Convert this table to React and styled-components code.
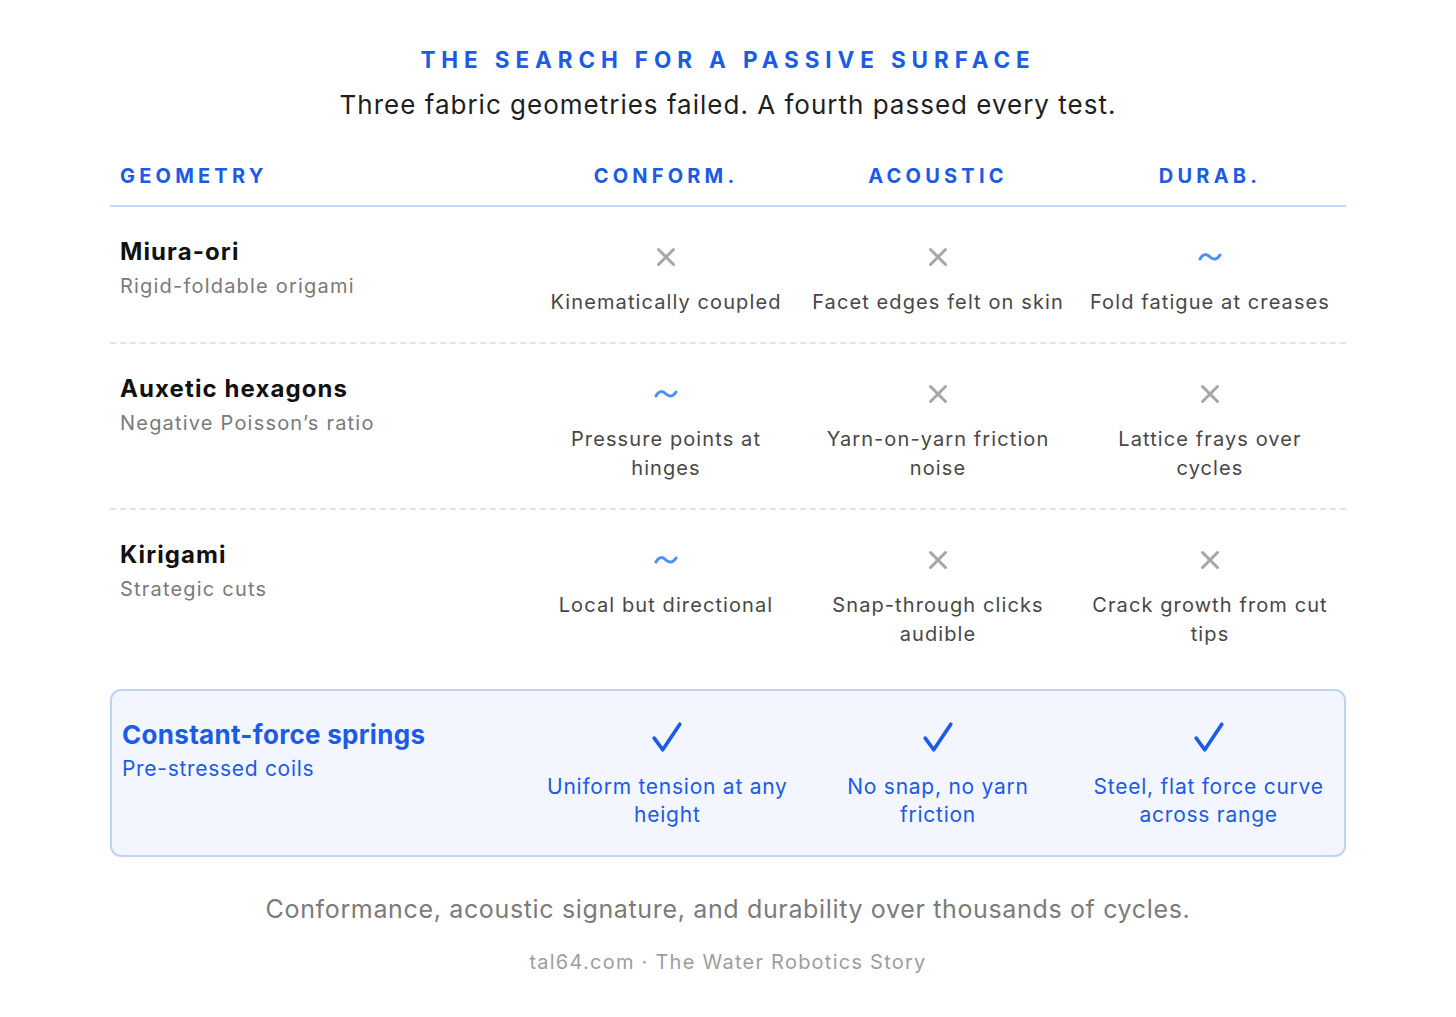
import React from "react";
import styled, { createGlobalStyle } from "styled-components";

const Global = createGlobalStyle`
  html, body { margin: 0; padding: 0; background: #ffffff; }
  body { font-family: Inter, "Noto Sans", "Liberation Sans", sans-serif; -webkit-font-smoothing: antialiased; }
`;

const BLUE = "#1b5be6";

const Page = styled.div`
  width: 1456px;
  min-height: 1017px;
  box-sizing: border-box;
  padding: 46px 110px 0;
  display: flex;
  flex-direction: column;
  align-items: center;
`;

const Kicker = styled.div`
  font-size: 22.5px;
  line-height: 28px;
  font-weight: 700;
  letter-spacing: 5.9px;
  color: ${BLUE};
  text-transform: uppercase;
`;

const Headline = styled.div`
  margin-top: 14px;
  font-size: 26px;
  line-height: 34px;
  letter-spacing: 1px;
  color: #1f1f1f;
`;

const Table = styled.div`
  margin-top: 42px;
  width: 100%;
  display: flex;
  flex-direction: column;
`;

const HeadRow = styled.div`
  display: grid;
  grid-template-columns: 420px repeat(3, 1fr);
  padding-bottom: 17px;
  border-bottom: 2px solid #c3d7f8;
`;

const HeadCell = styled.div`
  font-size: 20px;
  line-height: 24px;
  font-weight: 700;
  letter-spacing: 4.2px;
  color: ${BLUE};
  text-align: ${(p) => (p.$left ? "left" : "center")};
  padding-left: ${(p) => (p.$left ? "10px" : "0")};
`;

const Row = styled.div`
  display: grid;
  grid-template-columns: 420px repeat(3, 1fr);
  padding: 30px 0 25px;
  border-bottom: ${(p) => (p.$last ? "none" : "2px dashed #e4e4e4")};
`;

const WinRow = styled.div`
  margin-top: 15px;
  display: grid;
  grid-template-columns: 420px repeat(3, 1fr);
  padding: 28px 0 26px;
  border: 2px solid #bdd3f7;
  border-radius: 11px;
  background: #f3f6fe;
`;

const Geo = styled.div`
  padding-left: 10px;
  display: flex;
  flex-direction: column;
`;

const GeoName = styled.div`
  font-size: ${(p) => (p.$win ? "26px" : "24px")};
  line-height: ${(p) => (p.$win ? "32px" : "30px")};
  font-weight: 700;
  letter-spacing: ${(p) => (p.$win ? "0.3px" : "1.1px")};
  color: ${(p) => (p.$win ? BLUE : "#111111")};
`;

const GeoSub = styled.div`
  margin-top: ${(p) => (p.$win ? "4px" : "5px")};
  font-size: ${(p) => (p.$win ? "21px" : "20px")};
  line-height: 28px;
  color: ${(p) => (p.$win ? BLUE : "#7a7a7a")};
  letter-spacing: ${(p) => (p.$win ? "0.7px" : "1.2px")};
`;

const Cell = styled.div`
  display: flex;
  flex-direction: column;
  align-items: center;
  text-align: center;
  padding: 0 2px;
`;

const Mark = styled.div`
  margin-top: ${(p) => (p.$win ? "2px" : "6px")};
  height: ${(p) => (p.$win ? "32px" : "28px")};
  display: flex;
  align-items: center;
  justify-content: center;
`;

const Note = styled.div`
  margin-top: ${(p) => (p.$win ? "20px" : "17px")};
  font-size: ${(p) => (p.$win ? "21px" : "20px")};
  line-height: ${(p) => (p.$win ? "28px" : "29px")};
  color: ${(p) => (p.$win ? BLUE : "#474747")};
  letter-spacing: ${(p) => (p.$win ? "0.75px" : "1.1px")};
  max-width: 254px;
`;

const Caption = styled.div`
  margin-top: 36px;
  font-size: 25px;
  line-height: 32px;
  letter-spacing: 0.65px;
  color: #7b7b7b;
`;

const Credit = styled.div`
  margin-top: 24px;
  font-size: 20px;
  line-height: 26px;
  color: #9d9d9d;
  letter-spacing: 1.25px;
`;

const Cross = () => (
  <svg width="20" height="20" viewBox="0 0 20 20">
    <path d="M2.5 2.5 L17.5 17.5 M17.5 2.5 L2.5 17.5" stroke="#a6a6a6" strokeWidth="3" strokeLinecap="round" fill="none" />
  </svg>
);

const Tilde = () => (
  <svg width="24" height="10" viewBox="0 0 24 10">
    <path d="M2 7 C5 1, 9 2, 12 5 C15 8, 19 8, 22 3" stroke="#4c90f4" strokeWidth="3" strokeLinecap="round" fill="none" />
  </svg>
);

const Check = () => (
  <svg width="32" height="32" viewBox="0 0 30 30">
    <path d="M3 16 L11 27 L27 3" stroke="#1b5be6" strokeWidth="3.4" strokeLinecap="round" strokeLinejoin="round" fill="none" />
  </svg>
);

const icons = { x: Cross, t: Tilde, c: Check };

const rows = [
  {
    name: "Miura-ori",
    sub: "Rigid-foldable origami",
    cells: [
      ["x", "Kinematically coupled"],
      ["x", "Facet edges felt on skin"],
      ["t", "Fold fatigue at creases"],
    ],
  },
  {
    name: "Auxetic hexagons",
    sub: "Negative Poisson\u2019s ratio",
    cells: [
      ["t", "Pressure points at hinges"],
      ["x", "Yarn-on-yarn friction noise"],
      ["x", "Lattice frays over cycles"],
    ],
  },
  {
    name: "Kirigami",
    sub: "Strategic cuts",
    cells: [
      ["t", "Local but directional"],
      ["x", "Snap-through clicks audible"],
      ["x", "Crack growth from cut tips"],
    ],
  },
];

const winner = {
  name: "Constant-force springs",
  sub: "Pre-stressed coils",
  cells: [
    ["c", "Uniform tension at any height"],
    ["c", "No snap, no yarn friction"],
    ["c", "Steel, flat force curve across range"],
  ],
};

const Cells = ({ cells, win }) =>
  cells.map(([k, text], i) => {
    const Icon = icons[k];
    return (
      <Cell key={i}>
        <Mark $win={win}>
          <Icon />
        </Mark>
        <Note $win={win}>{text}</Note>
      </Cell>
    );
  });

export default function App() {
  return (
    <>
      <Global />
      <Page>
        <Kicker>The search for a passive surface</Kicker>
        <Headline>Three fabric geometries failed. A fourth passed every test.</Headline>
        <Table>
          <HeadRow>
            <HeadCell $left>GEOMETRY</HeadCell>
            <HeadCell>CONFORM.</HeadCell>
            <HeadCell>ACOUSTIC</HeadCell>
            <HeadCell>DURAB.</HeadCell>
          </HeadRow>
          {rows.map((r, i) => (
            <Row key={r.name} $last={i === rows.length - 1}>
              <Geo>
                <GeoName>{r.name}</GeoName>
                <GeoSub>{r.sub}</GeoSub>
              </Geo>
              <Cells cells={r.cells} />
            </Row>
          ))}
          <WinRow>
            <Geo>
              <GeoName $win>{winner.name}</GeoName>
              <GeoSub $win>{winner.sub}</GeoSub>
            </Geo>
            <Cells cells={winner.cells} win />
          </WinRow>
        </Table>
        <Caption>Conformance, acoustic signature, and durability over thousands of cycles.</Caption>
        <Credit>tal64.com · The Water Robotics Story</Credit>
      </Page>
    </>
  );
}
